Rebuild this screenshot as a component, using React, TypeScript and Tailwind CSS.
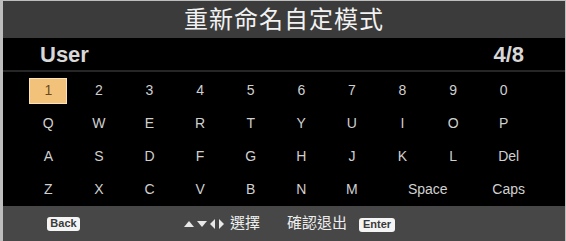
const ROWS: string[][] = [
  ['1', '2', '3', '4', '5', '6', '7', '8', '9', '0'],
  ['Q', 'W', 'E', 'R', 'T', 'Y', 'U', 'I', 'O', 'P'],
  ['A', 'S', 'D', 'F', 'G', 'H', 'J', 'K', 'L', 'Del'],
  ['Z', 'X', 'C', 'V', 'B', 'N', 'M', 'Space', 'Caps'],
];

function Key({ label, active }: { label: string; active?: boolean }) {
  if (active) {
    return (
      <div className="flex items-center justify-center">
        <div className="w-[38px] h-[26px] flex items-center justify-center bg-[#f3c27a] border border-[#fbe3b8] text-[#6b4a1e] text-[14px]">
          {label}
        </div>
      </div>
    );
  }
  const wide = label === 'Space';
  const shifted = label === 'Del' || label === 'Caps';
  return (
    <div
      className={`flex items-center justify-center text-[14px] text-[#d0d0d0] whitespace-nowrap ${
        wide ? 'col-span-2' : ''
      } ${shifted ? 'pl-[10px]' : ''}`}
    >
      {label}
    </div>
  );
}

function Arrows() {
  return (
    <svg width="44" height="12" viewBox="0 0 44 12" className="mr-[3px]">
      <polygon points="1,9 6,3 11,9" fill="#e8e8e8" />
      <polygon points="14,3 24,3 19,9" fill="#e8e8e8" />
      <polygon points="32,1 32,11 27,6" fill="#e8e8e8" />
      <polygon points="36,1 36,11 41,6" fill="#e8e8e8" />
    </svg>
  );
}

function Badge({ text, w }: { text: string; w: string }) {
  return (
    <span
      className={`inline-flex items-center justify-center h-[14px] ${w} rounded-[3px] bg-[#f4f4f4] text-[#3a3a3a] text-[11px] font-bold leading-none`}
    >
      {text}
    </span>
  );
}

export default function App() {
  return (
    <div
      className="w-[566px] h-[241px] flex flex-col bg-black border-l-[3px] border-t border-r border-[#bdbdbd] overflow-hidden"
      style={{ fontFamily: '"Liberation Sans", "Noto Sans CJK TC", sans-serif' }}
    >
      {/* title */}
      <div className="h-[37px] shrink-0 bg-[#3b3b3b] flex items-center justify-center text-[#f2f2f2] text-[24px] tracking-[1px]">
        重新命名自定模式
      </div>

      {/* name row */}
      <div className="h-[34px] shrink-0 flex items-center justify-between pl-[37px] pr-[41px] text-[22px] font-bold text-[#d8d8d8] border-b-2 border-[#262626]">
        <span>User</span>
        <span>4/8</span>
      </div>

      {/* keyboard */}
      <div className="flex-1 pl-[20px] pr-[36px] pt-[2px] grid grid-rows-4">
        {ROWS.map((row, r) => (
          <div key={r} className="grid grid-cols-10">
            {row.map((k, c) => (
              <Key key={c} label={k} active={r === 0 && c === 0} />
            ))}
          </div>
        ))}
      </div>

      {/* footer */}
      <div className="h-[35px] shrink-0 bg-[#474747] flex items-center pl-[44px] text-[#eeeeee] text-[15px]">
        <Badge text="Back" w="w-[33px]" />
        <div className="flex items-center ml-[103px]">
          <Arrows />
          <span>選擇</span>
          <span className="ml-[27px]">確認退出</span>
          <span className="ml-[12px]">
            <Badge text="Enter" w="w-[36px]" />
          </span>
        </div>
      </div>
    </div>
  );
}
